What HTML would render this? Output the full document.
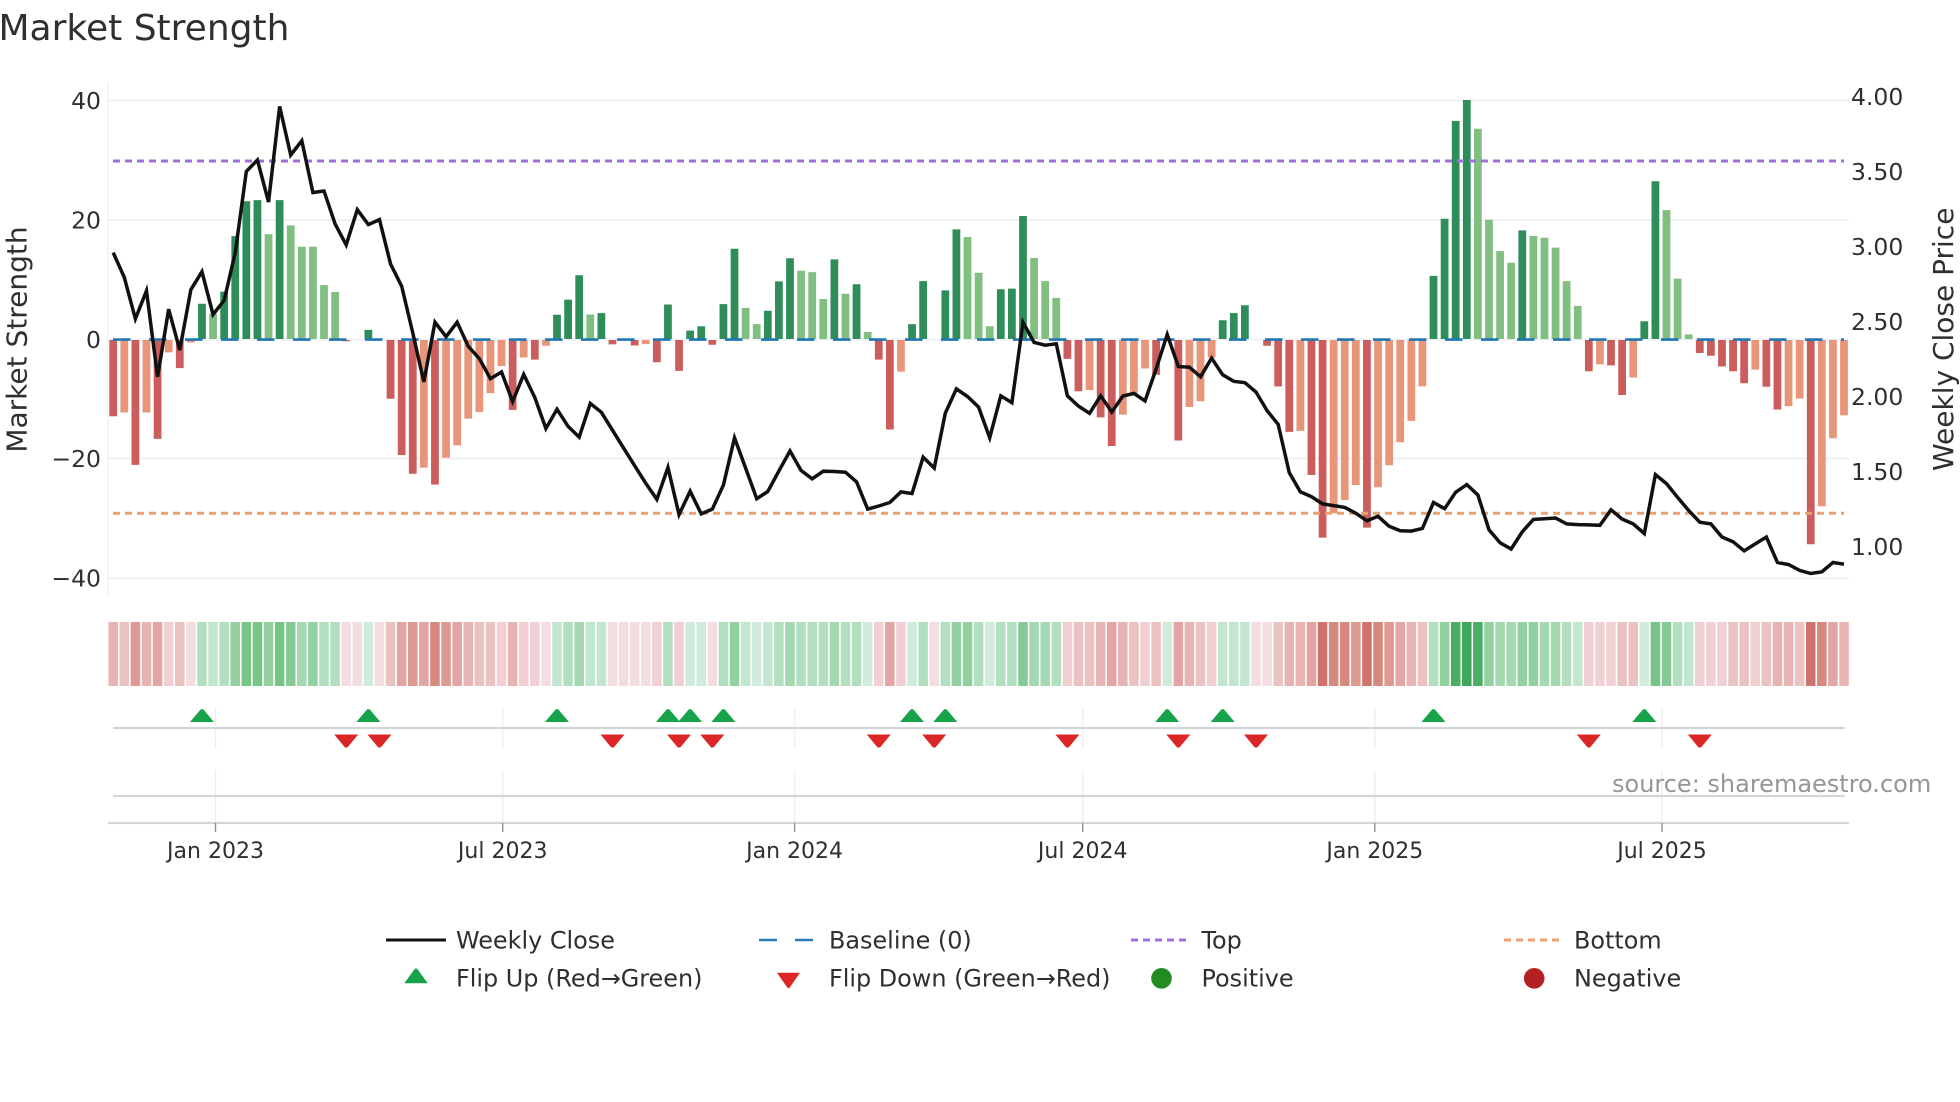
<!DOCTYPE html>
<html lang="en"><head><meta charset="utf-8"><title>Market Strength</title>
<style>
html,body{margin:0;padding:0;background:#fff;width:1960px;height:1102px;overflow:hidden}
svg{display:block}
text{font-family:"DejaVu Sans","Liberation Sans",sans-serif;fill:#2f2f2f}
</style></head><body>
<svg xmlns="http://www.w3.org/2000/svg" width="1960" height="1102" viewBox="0 0 1960 1102">
<rect width="1960" height="1102" fill="#fff"/>
<text x="-1.5" y="40" font-size="36" fill="#333">Market Strength</text>

<!-- grid -->
<path d="M108 100.6H1849M108 220H1849M108 339.5H1849M108 458.5H1849M108 578.2H1849" stroke="#eff0f6" stroke-width="2" fill="none"/>
<path d="M107.8 82V597" stroke="#f0f1f5" stroke-width="1.5"/>

<!-- bars -->
<g transform="translate(113.2 0) scale(11.095 1)" fill="none" stroke-width=".7">
<path stroke="#2f8d5a" d="M8 339V303.8M10 339V291.6M11 339V236.1M12 339V201.3M13 339V200.1M15 339V200.1M23 339V329.9M40 339V314.8M41 339V299.6M42 339V275.2M44 339V313.1M50 339V304.5M52 339V330.6M53 339V326.2M55 339V304.1M56 339V248.7M59 339V310.7M60 339V281.4M61 339V258.3M65 339V259.4M67 339V284.2M72 339V324.1M73 339V281.1M75 339V290.4M76 339V229.4M80 339V289.3M81 339V288.6M82 339V216M100 339V320.3M101 339V313.1M102 339V305.2M119 339V275.9M120 339V218.7M121 339V120.9M122 339V100M127 339V230.4M138 339V321.3M139 339V181.2"/>
<path stroke="#80bf80" d="M9 339V313.8M14 339V234.2M16 339V225.4M17 339V246.8M18 339V246.8M19 339V285.1M20 339V292M43 339V314.5M57 339V307.9M58 339V324.1M62 339V270.7M63 339V272.1M64 339V299M66 339V293.8M68 339V332M77 339V237M78 339V272.8M79 339V326.2M83 339V258M84 339V281.1M85 339V297.9M123 339V128.8M124 339V219.7M125 339V251.1M126 339V262.8M128 339V235.9M129 339V237.7M130 339V247.6M131 339V281.1M132 339V305.9M140 339V210.1M141 339V278.6M142 339V334.4"/>
<path stroke="#cb5d5d" d="M0 340V416.3M2 340V464.9M4 340V438.9M6 340V368.1M21 340V341.3M25 340V398.7M26 340V455M27 340V473.7M29 340V484.5M36 340V409.9M38 340V359.6M45 340V344.4M47 340V345.5M49 340V362.3M51 340V370.9M54 340V344.8M69 340V359.6M70 340V429.5M86 340V358.9M87 340V391.3M89 340V417.4M90 340V446M94 340V374.7M96 340V440.5M104 340V345.8M105 340V386.4M106 340V431.9M108 340V475M109 340V537.6M113 340V527.6M133 340V371.3M135 340V365.4M136 340V395M143 340V353M144 340V355.8M145 340V366.5M146 340V371.3M147 340V383.3M149 340V386.8M150 340V409.5M153 340V544.2"/>
<path stroke="#e8957a" d="M1 340V412.5M3 340V412.5M5 340V352.4M7 340V342.5M28 340V467.6M30 340V457.7M31 340V445.4M32 340V418.6M33 340V412.1M34 340V393.1M35 340V366.1M37 340V357.5M39 340V345.8M48 340V344.1M71 340V371.6M88 340V390M91 340V414.6M92 340V394M93 340V368.5M97 340V407M98 340V401.2M99 340V357.6M107 340V430.9M110 340V513.2M111 340V500.1M112 340V485M114 340V487.3M115 340V465.3M116 340V442.2M117 340V420.9M118 340V386.4M134 340V364.4M137 340V377.5M148 340V369.6M151 340V406.1M152 340V398.5M154 340V506.3M155 340V438.2M156 340V415.4"/>
</g>

<!-- reference lines -->
<path d="M113 161H1844" stroke="#a06fdb" stroke-width="3" stroke-dasharray="7 5" fill="none"/>
<path d="M113 513.2H1844" stroke="#e9a26f" stroke-width="3" stroke-dasharray="7 5" fill="none"/>
<path d="M113 339.6H1844" stroke="#1f77b4" stroke-width="2.6" stroke-dasharray="17.5 18.5" fill="none"/>

<!-- weekly close -->
<g transform="translate(113.2 0) scale(11.095 1)">
<polyline vector-effect="non-scaling-stroke" fill="none" stroke="#111" stroke-width="3.5" stroke-linejoin="miter" points="0,252.6 1,277.4 2,318.8 3,290.8 4,376.9 5,309.2 6,350.1 7,289.7 8,271.7 9,314.5 10,300.4 11,252.6 12,171.4 13,160 14,202 15,106.4 16,155 17,140.8 18,192.5 19,191 20,223.9 21,244.9 22,209.7 23,224.6 24,219.6 25,264 26,286.2 27,332.9 28,381.9 29,322.2 30,336.7 31,322.2 32,346.3 33,358.6 34,378.7 35,372 36,401.6 37,374.4 38,397.5 39,428.5 40,409.2 41,426.4 42,437.1 43,403.4 44,412.3 45,430.2 46,448.1 47,465.7 48,483.3 49,499.4 50,467.4 51,514.6 52,491.2 53,513.9 54,509.1 55,485 56,437.8 57,468.1 58,498.7 59,491.5 60,470.9 61,450.9 62,470.5 63,478.8 64,471.2 65,471.5 66,472.2 67,481.9 68,509.1 69,506 70,502.5 71,491.9 72,493.6 73,457.1 74,468.1 75,413 76,388.9 77,396.5 78,407.1 79,437.8 80,395.8 81,402.7 82,322.4 83,342.4 84,345.2 85,343.8 86,395.8 87,406.1 88,413.3 89,395.8 90,412 91,396.1 92,393.4 93,400.9 94,368.9 95,334.5 96,366.5 97,367.2 98,376.8 99,358.2 100,374.8 101,381.3 102,382.7 103,392 104,410.6 105,424.4 106,472.6 107,491.9 108,496.7 109,503.9 110,505.6 111,507.4 112,513.2 113,520.8 114,516.3 115,526.3 116,530.8 117,531.1 118,528.4 119,502.5 120,508.7 121,492.2 122,484.6 123,495 124,529.7 125,542.8 126,549 127,531.8 128,519.4 129,518.7 130,518 131,523.9 132,524.6 133,524.9 134,525.3 135,509.8 136,519.1 137,523.9 138,533.5 139,474.6 140,483.6 141,497.4 142,510.5 143,522.2 144,523.9 145,537 146,541.8 147,550.8 148,543.9 149,537 150,562.5 151,564.5 152,570.4 153,573.5 154,571.8 155,562.5 156,564.2"/>
</g>

<!-- tick labels -->
<g font-size="23.5">
<text x="101" y="109" text-anchor="end">40</text>
<text x="101" y="228.5" text-anchor="end">20</text>
<text x="101" y="348" text-anchor="end">0</text>
<text x="101" y="467" text-anchor="end">−20</text>
<text x="101" y="586.5" text-anchor="end">−40</text>
<text x="1851" y="105">4.00</text>
<text x="1851" y="180">3.50</text>
<text x="1851" y="255">3.00</text>
<text x="1851" y="330">2.50</text>
<text x="1851" y="405">2.00</text>
<text x="1851" y="480">1.50</text>
<text x="1851" y="555">1.00</text>
</g>
<text transform="translate(26.7 339.5) rotate(-90)" font-size="28" text-anchor="middle">Market Strength</text>
<text transform="translate(1953 339.3) rotate(-90)" font-size="28" text-anchor="middle">Weekly Close Price</text>

<!-- heat strip -->
<g transform="translate(113.2 0) scale(11.095 1)" fill="none" stroke-width=".86">
<path stroke="#f4dde0" d="M7 622V686M21 622V686M22 622V686M24 622V686M39 622V686M45 622V686M46 622V686M47 622V686M48 622V686M54 622V686M74 622V686M103 622V686M104 622V686"/>
<path stroke="#f0d0d2" d="M5 622V686M35 622V686M37 622V686M38 622V686M49 622V686M51 622V686M69 622V686M71 622V686M86 622V686M93 622V686M99 622V686M133 622V686M134 622V686M135 622V686M143 622V686M144 622V686M145 622V686M148 622V686"/>
<path stroke="#ebc2c2" d="M1 622V686M6 622V686M25 622V686M33 622V686M34 622V686M87 622V686M88 622V686M92 622V686M94 622V686M98 622V686M105 622V686M118 622V686M136 622V686M137 622V686M146 622V686M147 622V686M149 622V686M152 622V686"/>
<path stroke="#e7b3b3" d="M0 622V686M3 622V686M32 622V686M36 622V686M89 622V686M91 622V686M97 622V686M106 622V686M107 622V686M117 622V686M150 622V686M151 622V686M156 622V686"/>
<path stroke="#e2a5a3" d="M4 622V686M26 622V686M28 622V686M31 622V686M70 622V686M90 622V686M96 622V686M108 622V686M116 622V686M155 622V686"/>
<path stroke="#dd9a93" d="M2 622V686M27 622V686M30 622V686M112 622V686M115 622V686"/>
<path stroke="#d7887f" d="M29 622V686M110 622V686M111 622V686M114 622V686M154 622V686"/>
<path stroke="#ce726c" d="M109 622V686M113 622V686M153 622V686"/>
<path stroke="#d0ebdc" d="M23 622V686M52 622V686M53 622V686M58 622V686M68 622V686M79 622V686M95 622V686M72 622V686M138 622V686"/>
<path stroke="#c3e6d0" d="M9 622V686M40 622V686M43 622V686M44 622V686M57 622V686M59 622V686M100 622V686M101 622V686M102 622V686M132 622V686M142 622V686"/>
<path stroke="#b3dfc1" d="M8 622V686M10 622V686M19 622V686M20 622V686M41 622V686M50 622V686M55 622V686M60 622V686M62 622V686M63 622V686M64 622V686M66 622V686M67 622V686M73 622V686M75 622V686M78 622V686M80 622V686M81 622V686M85 622V686M119 622V686M131 622V686M141 622V686"/>
<path stroke="#a3d8b1" d="M17 622V686M42 622V686M65 622V686M83 622V686M84 622V686M61 622V686M125 622V686M126 622V686M129 622V686M130 622V686"/>
<path stroke="#93d0a0" d="M11 622V686M14 622V686M18 622V686M56 622V686M76 622V686M77 622V686M120 622V686M124 622V686M127 622V686M128 622V686"/>
<path stroke="#85ca94" d="M16 622V686M82 622V686M140 622V686"/>
<path stroke="#77c487" d="M12 622V686M13 622V686M15 622V686M139 622V686"/>
<path stroke="#47ae62" d="M121 622V686M123 622V686"/>
<path stroke="#3fa65a" d="M122 622V686"/>
</g>

<!-- date grid -->
<path d="M215.5 708V748M215.5 770V823M502.7 708V748M502.7 770V823M794.6 708V748M794.6 770V823M1082.7 708V748M1082.7 770V823M1374.8 708V748M1374.8 770V823M1662 708V748M1662 770V823" stroke="#eceef3" stroke-width="1.4" fill="none"/>
<path d="M113 728H1844.5M113 796H1844.5" stroke="#d2d5da" stroke-width="2.2" fill="none"/>
<path d="M108 823H1849" stroke="#d2d5da" stroke-width="2.2" fill="none"/>
<path d="M215.5 823V832M502.7 823V832M794.6 823V832M1082.7 823V832M1374.8 823V832M1662 823V832" stroke="#8f8f8f" stroke-width="1.4" fill="none"/>

<!-- flip markers -->
<g fill="#16a34a">
<path d="M190 722L200.8 709.3H203.2L214 722Z"/>
<path d="M356.4 722L367.2 709.3H369.6L380.4 722Z"/>
<path d="M545 722L555.8 709.3H558.2L569 722Z"/>
<path d="M656 722L666.8 709.3H669.2L680 722Z"/>
<path d="M678.1 722L688.9 709.3H691.3L702.1 722Z"/>
<path d="M711.4 722L722.2 709.3H724.6L735.4 722Z"/>
<path d="M900 722L910.8 709.3H913.2L924 722Z"/>
<path d="M933.3 722L944.1 709.3H946.5L957.3 722Z"/>
<path d="M1155.2 722L1166 709.3H1168.4L1179.2 722Z"/>
<path d="M1210.7 722L1221.5 709.3H1223.9L1234.7 722Z"/>
<path d="M1421.5 722L1432.3 709.3H1434.7L1445.5 722Z"/>
<path d="M1632.3 722L1643.1 709.3H1645.5L1656.3 722Z"/>
</g>
<g fill="#dc2626">
<path d="M334.2 734.5L345 747.5H347.4L358.2 734.5Z"/>
<path d="M367.5 734.5L378.3 747.5H380.7L391.5 734.5Z"/>
<path d="M600.5 734.5L611.3 747.5H613.7L624.5 734.5Z"/>
<path d="M667 734.5L677.8 747.5H680.2L691 734.5Z"/>
<path d="M700.3 734.5L711.1 747.5H713.5L724.3 734.5Z"/>
<path d="M866.8 734.5L877.6 747.5H880L890.8 734.5Z"/>
<path d="M922.2 734.5L933 747.5H935.4L946.2 734.5Z"/>
<path d="M1055.4 734.5L1066.2 747.5H1068.6L1079.4 734.5Z"/>
<path d="M1166.3 734.5L1177.1 747.5H1179.5L1190.3 734.5Z"/>
<path d="M1244 734.5L1254.8 747.5H1257.2L1268 734.5Z"/>
<path d="M1576.8 734.5L1587.6 747.5H1590L1600.8 734.5Z"/>
<path d="M1687.8 734.5L1698.6 747.5H1701L1711.8 734.5Z"/>
</g>

<text x="1612" y="792" font-size="24" style="fill:#969696">source: sharemaestro.com</text>

<!-- date labels -->
<g font-size="22" text-anchor="middle">
<text x="215.5" y="858">Jan 2023</text>
<text x="502.7" y="858">Jul 2023</text>
<text x="794.6" y="858">Jan 2024</text>
<text x="1082.7" y="858">Jul 2024</text>
<text x="1374.8" y="858">Jan 2025</text>
<text x="1662" y="858">Jul 2025</text>
</g>

<!-- legend -->
<path d="M386 940H446" stroke="#111" stroke-width="3" fill="none"/>
<path d="M759 940H813" stroke="#2a7fb8" stroke-width="2.6" stroke-dasharray="18 18" fill="none"/>
<path d="M1131 940H1186" stroke="#a06fdb" stroke-width="3" stroke-dasharray="7 5" fill="none"/>
<path d="M1504 940H1559" stroke="#e9a26f" stroke-width="3" stroke-dasharray="7 5" fill="none"/>
<path d="M404.3 983.3L415 968.5H417L427.7 983.3Z" fill="#16a34a"/>
<path d="M777 972.7L787.6 988H789.4L800 972.7Z" fill="#dc2626"/>
<circle cx="1161.5" cy="978.3" r="10.3" fill="#228b22"/>
<circle cx="1534.2" cy="978.3" r="10.3" fill="#b22222"/>
<g font-size="23.9">
<text x="456" y="948.5">Weekly Close</text>
<text x="456" y="986.5">Flip Up (Red→Green)</text>
<text x="829" y="948.5">Baseline (0)</text>
<text x="829" y="986.5">Flip Down (Green→Red)</text>
<text x="1201.5" y="948.5">Top</text>
<text x="1201.5" y="986.5">Positive</text>
<text x="1574" y="948.5">Bottom</text>
<text x="1574" y="986.5">Negative</text>
</g>
</svg>
</body></html>
